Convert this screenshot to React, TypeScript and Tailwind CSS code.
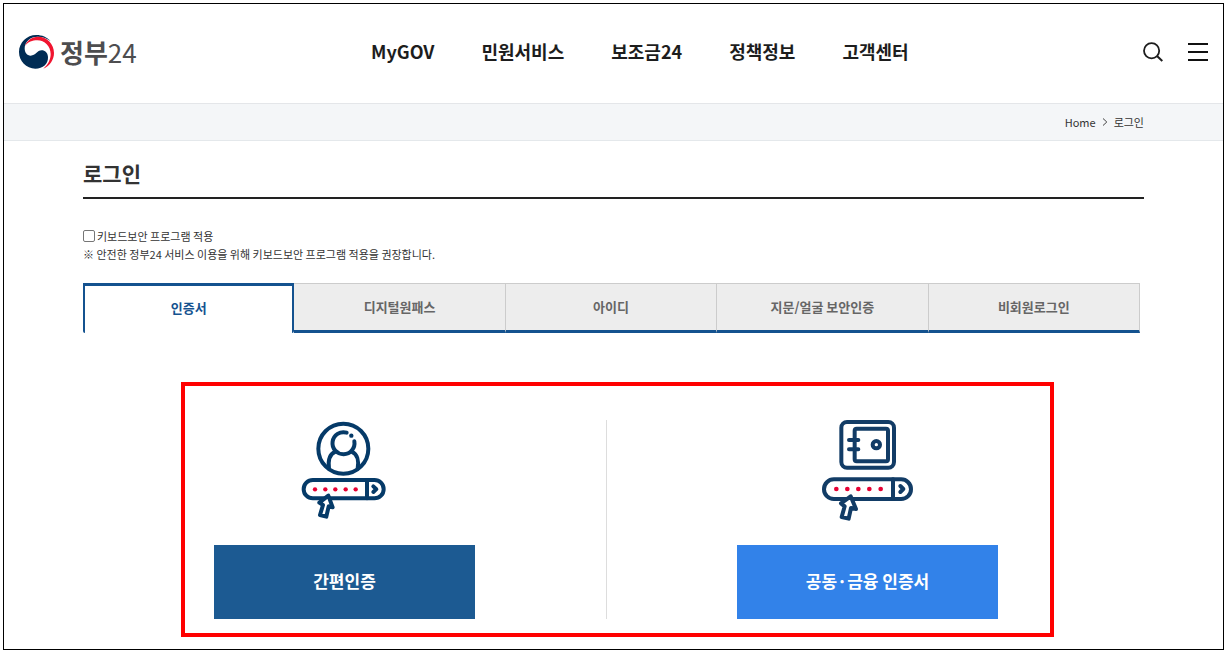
import { useState } from 'react'
import type { ReactNode } from 'react'
import { clsx } from 'clsx'

const menus = ['MyGOV', '민원서비스', '보조금24', '정책정보', '고객센터']

const tabs = ['인증서', '디지털원패스', '아이디', '지문/얼굴 보안인증', '비회원로그인']

function GovLogo() {
  return (
    <svg className="h-[36px] w-[36px]" viewBox="54 100 108 108" aria-hidden="true">
      <path
        fill="#002c54"
        d="M152 122C141 109 126 103 109 103C80 103 57 126 57 154C57 182 79 204 106 204C129 204 145 190 144 169C143 156 135 149 125 149C111 149 107 165 92 165C81 165 74 156 74 143C74 122 92 108 113 108C129 108 142 113 152 122Z"
      />
      <path
        fill="#f0142f"
        d="M75 136C81 119 96 108 114 108C141 108 162 130 162 157C162 177 150 195 130 204C144 192 152 177 152 160C152 137 134 119 112 119C97 119 84 124 75 136Z"
      />
    </svg>
  )
}

function SearchIcon() {
  return (
    <svg className="h-5 w-5" viewBox="0 0 20 20" fill="none" stroke="#1d1d1d" strokeWidth="1.8" aria-hidden="true">
      <circle cx="8.6" cy="8.7" r="7.6" />
      <path d="M14 14l5.3 5" strokeWidth="2" />
    </svg>
  )
}

function MenuIcon() {
  return (
    <svg className="h-5 w-5" viewBox="0 0 20 20" stroke="#111" strokeWidth="2" aria-hidden="true">
      <path d="M0 2h20M0 10h20M0 18h20" />
    </svg>
  )
}

function EasyAuthIcon() {
  return (
    <svg
      className="h-[102px] w-[92px]"
      viewBox="57 30 276 306"
      fill="none"
      stroke="#053a68"
      strokeWidth="12"
      strokeLinecap="round"
      strokeLinejoin="round"
      aria-hidden="true"
    >
      <circle cx="190" cy="116" r="75" />
      <path d="M200 68A33 33 0 1 0 223 94" />
      <circle cx="214" cy="77" r="6.500" fill="#053a68" stroke="none" />
      <path d="M147 176C144 153 149 132 166 125M233 176C237 153 232 132 215 125" />
      <rect x="71" y="210" width="240" height="55" rx="27.5" />
      <path d="M261 210v55" />
      <path d="M280 229l9 8.500-9 8.500" />
      <g fill="#e60033" stroke="none">
        <circle cx="105" cy="238" r="6.500" />
        <circle cx="136" cy="238" r="6.500" />
        <circle cx="166" cy="238" r="6.500" />
        <circle cx="197" cy="238" r="6.500" />
        <circle cx="227" cy="238" r="6.500" />
      </g>
      <path fill="#fff" d="M145 257L118 278L129 285L120 315L139 320L146 289L158 292Z" />
    </svg>
  )
}

function CertificateIcon() {
  return (
    <svg
      className="h-[102px] w-[92px]"
      viewBox="66 30 276 306"
      fill="none"
      stroke="#123c66"
      strokeWidth="12"
      strokeLinecap="round"
      strokeLinejoin="round"
      aria-hidden="true"
    >
      <rect x="124" y="36" width="158" height="137" rx="17" />
      <rect x="164" y="56" width="100" height="98" rx="6" />
      <path d="M147 90h28M147 118h28" />
      <circle cx="229" cy="104" r="11" />
      <rect x="72" y="208" width="261" height="59" rx="29.5" />
      <path d="M279 208v59" />
      <path d="M301 228l9 9-9 9" />
      <g fill="#e60033" stroke="none">
        <circle cx="109" cy="237" r="7" />
        <circle cx="142" cy="237" r="7" />
        <circle cx="175" cy="237" r="7" />
        <circle cx="208" cy="237" r="7" />
        <circle cx="242" cy="237" r="7" />
      </g>
      <path fill="#fff" d="M152 259L123 280L134 289L125 321L146 326L153 294L168 297Z" />
    </svg>
  )
}

interface AuthMethodProps {
  label: string
  icon: ReactNode
  color: 'navy' | 'blue'
}

function AuthMethod({ label, icon, color }: AuthMethodProps) {
  return (
    <div className="flex w-[261px] flex-col items-center gap-[23px]">
      {icon}
      <button
        type="button"
        className={clsx(
          'h-[74px] w-full pb-[2px] text-[17px] font-bold text-white',
          color === 'navy' && 'bg-[#1c5a92]',
          color === 'blue' && 'bg-[#3282e9]'
        )}
      >
        {label}
      </button>
    </div>
  )
}

export default function App() {
  const [activeTab, setActiveTab] = useState(0)

  return (
    <div className="bg-white pt-[3px] pr-[5px] pb-1 pl-[3px] font-['Noto_Sans_CJK_KR','Noto_Sans',sans-serif] text-[#222]">
      <div className="border border-black">
        <header className="flex h-[100px] items-center justify-between border-b border-[#e4e6e9] pr-[15px] pb-1 pl-[14px]">
          <a href="#" className="flex items-center gap-[6px]">
            <GovLogo />
            <span className="text-[26px] leading-8 text-[#4d4d4f]">
              <b>정부</b>24
            </span>
          </a>
          <nav className="flex gap-[47px]">
            {menus.map((menu) => (
              <a key={menu} href="#" className="text-[18px] font-bold text-[#1d1d1d]">
                {menu}
              </a>
            ))}
          </nav>
          <div className="flex gap-[25px]">
            <button type="button" aria-label="검색">
              <SearchIcon />
            </button>
            <button type="button" aria-label="전체메뉴">
              <MenuIcon />
            </button>
          </div>
        </header>

        <div className="flex h-[37px] items-center justify-end gap-[6px] border-b border-[#e4e8eb] bg-[#f4f6f8] px-[79px] text-[11px] text-[#333]">
          <a href="#">Home</a>
          <svg className="h-2 w-[6px]" viewBox="0 0 6 8" fill="none" stroke="#444" aria-hidden="true">
            <path d="M1 0.500L4.800 4L1 7.500" />
          </svg>
          <span>로그인</span>
        </div>

        <main className="px-[79px] pt-4 pb-3">
          <h1 className="border-b-2 border-[#222] pb-2 text-[21px] leading-8 font-bold text-[#333]">로그인</h1>

          <div className="mt-7 text-[11px] leading-[18px] text-[#333]">
            <label className="flex items-center gap-[2px]">
              <input
                type="checkbox"
                className="h-3 w-3 appearance-none rounded-[2px] border border-[#767676] bg-white checked:bg-[#14528f]"
              />
              키보드보안 프로그램 적용
            </label>
            <p>※ 안전한 정부24 서비스 이용을 위해 키보드보안 프로그램 적용을 권장합니다.</p>
          </div>

          <div role="tablist" className="mt-5 mr-1 grid grid-cols-5">
            {tabs.map((tab, i) => (
              <button
                key={tab}
                type="button"
                role="tab"
                aria-selected={activeTab === i}
                onClick={() => setActiveTab(i)}
                className={clsx(
                  'h-[50px] text-[13px] font-bold',
                  activeTab === i
                    ? 'rounded-b-[2px] border-x-2 border-t-[3px] border-[#14528f] bg-white pb-[3px] text-[#14528f]'
                    : 'border-t border-r border-b-[3px] border-t-[#ccc] border-r-[#ccc] border-b-[#14528f] bg-[#ededed] text-[#666]'
                )}
              >
                {tab}
              </button>
            ))}
          </div>

          <section className="mt-[49px] mr-[90px] ml-[98px] flex justify-between border-4 border-[#f00] pt-[34px] pr-[52px] pb-[14px] pl-[29px]">
            <AuthMethod label="간편인증" icon={<EasyAuthIcon />} color="navy" />
            <div className="w-px bg-[#ddd]" />
            <AuthMethod label="공동·금융 인증서" icon={<CertificateIcon />} color="blue" />
          </section>
        </main>
      </div>
    </div>
  )
}
